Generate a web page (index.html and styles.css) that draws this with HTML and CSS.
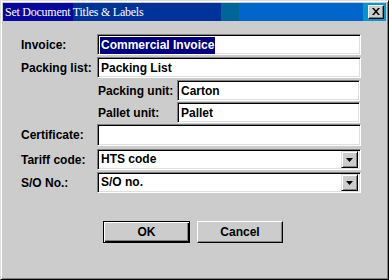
FILE: index.html
```html
<!DOCTYPE html>
<html>
<head>
<meta charset="utf-8">
<link rel="stylesheet" href="styles.css">
</head>
<body>
<div class="window">
  <div class="titlebar">
    <span class="title">Set Document Titles &amp; Labels</span>
    <span class="close"><svg width="8" height="7" viewBox="0 0 8 7"><path d="M0 0h2l2 2.5L6 0h2L5 3.5 8 7H6L4 4.5 2 7H0l3-3.5z" fill="#000"/></svg></span>
  </div>
  <div class="content">
    <div class="form">
      <div class="row row-invoice">
        <span class="label">Invoice:</span>
        <div class="field"><span class="sel">Commercial Invoice</span></div>
      </div>
      <div class="row row-packing">
        <span class="label">Packing list:</span>
        <div class="field">Packing List</div>
      </div>
      <div class="row row-unit">
        <span></span>
        <div class="subrow">
          <span class="label">Packing unit:</span>
          <div class="field narrow">Carton</div>
        </div>
      </div>
      <div class="row row-pallet">
        <span></span>
        <div class="subrow">
          <span class="label">Pallet unit:</span>
          <div class="field narrow">Pallet</div>
        </div>
      </div>
      <div class="row row-cert">
        <span class="label">Certificate:</span>
        <div class="field tall"></div>
      </div>
      <div class="row row-tariff">
        <span class="label">Tariff code:</span>
        <div class="field combo"><span class="ctext">HTS code</span><span class="drop"><svg width="7" height="4" viewBox="0 0 7 4"><path d="M0 0h7L3.5 4z" fill="#000"/></svg></span></div>
      </div>
      <div class="row row-so">
        <span class="label">S/O No.:</span>
        <div class="field combo"><span class="ctext">S/O no.</span><span class="drop"><svg width="7" height="4" viewBox="0 0 7 4"><path d="M0 0h7L3.5 4z" fill="#000"/></svg></span></div>
      </div>
    </div>
    <div class="buttons">
      <button class="btn default">OK</button>
      <button class="btn">Cancel</button>
    </div>
  </div>
</div>
</body>
</html>
```

FILE: styles.css
```css
html, body {
  margin: 0;
  padding: 0;
  background: #cccccc;
}
.window {
  width: 389px;
  height: 280px;
  box-sizing: border-box;
  background: #cccccc;
  border-top: 1px solid #dfdfdf;
  border-left: 1px solid #dfdfdf;
  border-right: 1px solid #000;
  border-bottom: 1px solid #000;
  box-shadow: inset 1px 1px 0 #fff, inset -1px -1px 0 #808080;
  padding: 2px;
  display: flex;
  flex-direction: column;
  font-family: "Liberation Sans", Arial, sans-serif;
  font-weight: bold;
  font-size: 12px;
  color: #000;
}
.titlebar {
  height: 18px;
  display: flex;
  align-items: center;
  justify-content: space-between;
  padding: 0 2px 0 2px;
  background: linear-gradient(to right,
    #08089c 0, #08089c 70px,
    #003399 70px, #003399 218px,
    #006699 218px, #006699 236px,
    #0066cc 236px, #0066cc 360px,
    #0099cc 360px);
}
.title {
  font-family: "Liberation Serif", "Times New Roman", serif;
  font-weight: normal;
  font-size: 12px;
  letter-spacing: -0.25px;
  color: #fff;
  line-height: 18px;
}
.close {
  width: 16px;
  height: 14px;
  box-sizing: border-box;
  background: #cccccc;
  border-top: 1px solid #fff;
  border-left: 1px solid #fff;
  border-right: 1px solid #000;
  border-bottom: 1px solid #000;
  box-shadow: inset -1px -1px 0 #808080;
  display: flex;
  align-items: center;
  justify-content: center;
}
.close svg { display: block; margin: 0 1px 1px 0; }
.content {
  display: flex;
  flex-direction: column;
}
.form {
  display: flex;
  flex-direction: column;
  padding-left: 18px;
}
.row {
  display: grid;
  grid-template-columns: 76px 264px;
  align-items: center;
  height: 21px;
}
.row-invoice { margin-top: 13px; }
.row-packing { margin-top: 2px; }
.row-unit { margin-top: 2px; }
.row-pallet { margin-top: 1px; }
.row-cert { margin-top: 1px; height: 22px; }
.row-tariff { margin-top: 3px; }
.row-so { margin-top: 2px; }
.label {
  white-space: nowrap;
  line-height: 14px;
}
.subrow {
  display: flex;
  align-items: center;
  height: 21px;
  padding-left: 1px;
}
.subrow .label { width: 79px; }
.field {
  height: 21px;
  box-sizing: border-box;
  background: #fff;
  border-top: 1px solid #808080;
  border-left: 1px solid #808080;
  border-right: 1px solid #fff;
  border-bottom: 1px solid #fff;
  box-shadow: inset 1px 1px 0 #000, inset -1px -1px 0 #dfdfdf;
  padding: 2px 2px 2px 3px;
  line-height: 17px;
  white-space: nowrap;
  overflow: hidden;
}
.field.narrow { width: 183px; }
.field.tall { height: 22px; }
.sel {
  display: inline-block;
  background: #000080;
  color: #fff;
  margin-left: -1px;
  padding: 0 1px;
}
.combo {
  display: flex;
  align-items: center;
  justify-content: space-between;
  padding: 2px 2px 2px 3px;
}
.drop {
  width: 17px;
  height: 17px;
  box-sizing: border-box;
  background: #cccccc;
  border-top: 1px solid #dfdfdf;
  border-left: 1px solid #dfdfdf;
  border-right: 1px solid #000;
  border-bottom: 1px solid #000;
  box-shadow: inset 1px 1px 0 #fff, inset -1px -1px 0 #808080;
  display: flex;
  align-items: center;
  justify-content: center;
}
.drop svg { display: block; }
.buttons {
  display: flex;
  gap: 7px;
  margin-top: 28px;
  padding-left: 100px;
}
.btn {
  height: 22px;
  width: 86px;
  box-sizing: border-box;
  padding: 0;
  margin: 0;
  background: #cccccc;
  font-family: "Liberation Sans", Arial, sans-serif;
  font-weight: bold;
  font-size: 12px;
  color: #000;
  border-top: 1px solid #fff;
  border-left: 1px solid #fff;
  border-right: 1px solid #000;
  border-bottom: 1px solid #000;
  box-shadow: inset -1px -1px 0 #808080;
}
.btn.default {
  width: 87px;
  border: 1px solid #000;
  box-shadow: inset 1px 1px 0 #fff, inset -1px -1px 0 #000, inset -2px -2px 0 #808080;
}
```
